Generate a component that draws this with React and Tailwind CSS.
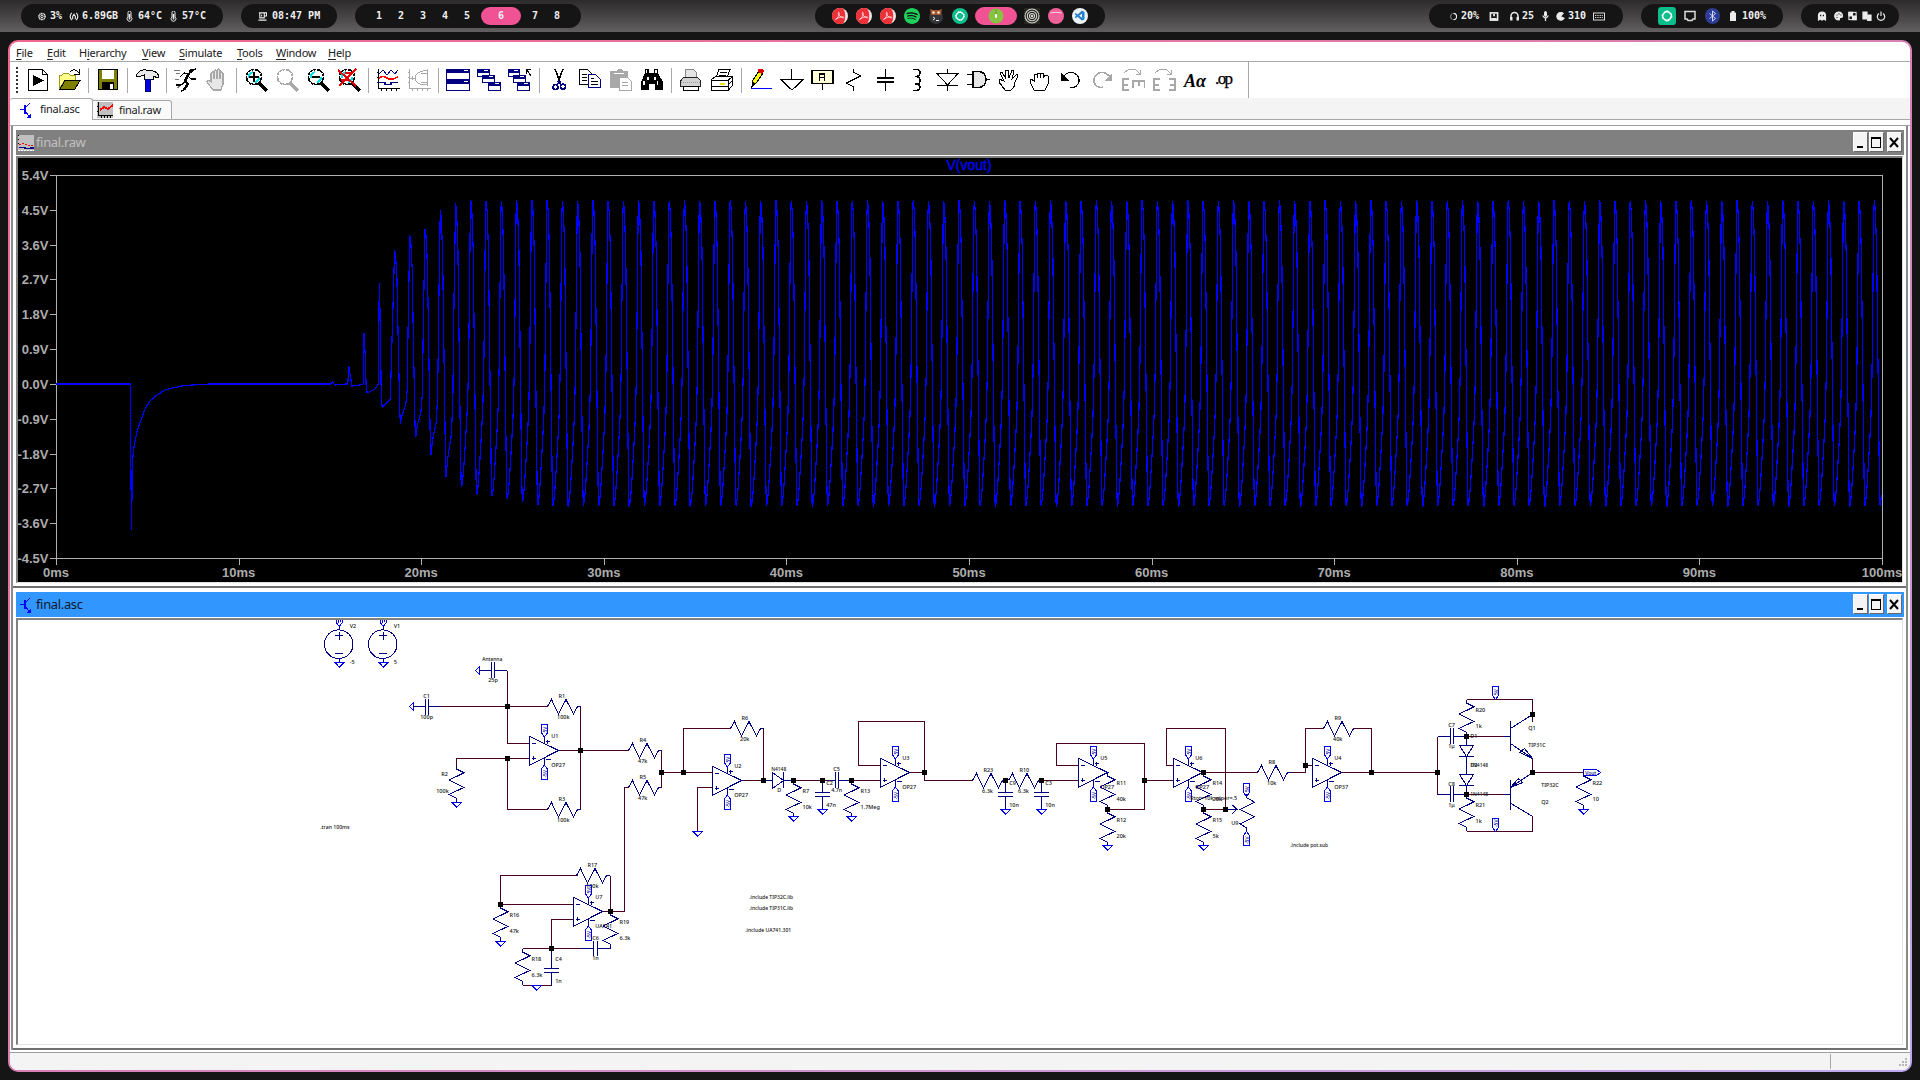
import React from "react";
import { SiSpotify } from "react-icons/si";
import { VscVscode } from "react-icons/vsc";

const NAVY = "#000080";
const BLUE = "#0000e6";
const WIRE = "#4b0026";

/* ---------- top status bar ---------- */

const Pill = ({ className, children }) => (
  <div className={`h-6 rounded-full bg-[#151515] flex items-center shrink-0 ${className}`}>{children}</div>
);

const Glyph = ({ w = 10, h = 10, className = "", children }) => (
  <svg width={w} height={h} viewBox="0 0 10 10" className={`shrink-0 ${className}`} fill="none" stroke="#ececec" strokeWidth="1.2">
    {children}
  </svg>
);

const Thermo = ({ className = "" }) => (
  <svg width="7" height="11" viewBox="0 0 7 11" className={`shrink-0 ${className}`} fill="none" stroke="#ececec">
    <path d="M2 1.500a1.500 1.500 0 0 1 3 0V6a2.400 2.400 0 1 1-3 0z" />
    <path d="M3.500 3v5.500" strokeWidth="1.600" />
  </svg>
);

const Acrobat = () => (
  <svg width="16" height="16" viewBox="0 0 16 16" className="shrink-0">
    <circle cx="8" cy="8" r="8" fill="#f4e4e4" />
    <path d="M11 .6A8 8 0 1 0 11 15.4C14 12 14 4 11 .6z" fill="#ee3138" />
    <path d="M3.500 11.500c2-1 4-4 3.700-6.500-.1-1-1.200-1-1 .2.4 2.400 2.600 4.400 5 4.600 1 0 .8-1-.4-1-2.600 0-5 1-7.300 2.700z" fill="none" stroke="#fff" strokeWidth=".7" />
  </svg>
);

const Swirl = () => (
  <path d="M6.300 4.200a4.800 4.800 0 0 1 5.900 4.400M11.800 6.300a4.800 4.800 0 0 1-4.400 5.900M9.700 11.800a4.800 4.800 0 0 1-5.900-4.400M4.200 9.700a4.800 4.800 0 0 1 4.400-5.900" fill="none" stroke="#fff" strokeWidth="1.300" strokeLinecap="round" />
);

const TopBar = () => (
  <div className="h-8 w-full flex items-center bg-linear-to-b from-[#2d2b2c] to-[#625f60] text-[#f0f0f0] text-[10px] font-bold leading-none whitespace-pre font-['DejaVu_Sans_Mono',monospace]">
    <Pill className="ml-[21px] w-[202px] pl-[17px]">
      <Glyph w={8} h={9}><circle cx="5" cy="5" r="3.800" strokeWidth="1.900" strokeDasharray="1.500 .5" /><circle cx="5" cy="5" r="1.500" /></Glyph>
      <span className="ml-[4px] w-[19px]">3%</span>
      <Glyph w={10} h={9}><path d="M2.500 1Q-1 5 2.500 9M7.500 1q3.500 4 0 8M3.500 8V5L5 2.500 6.500 5v3" /></Glyph>
      <span className="ml-[3px] w-[44px]">6.89GB</span>
      <Thermo />
      <span className="ml-[5px] w-[32px]">64°C</span>
      <Thermo />
      <span className="ml-[5px]">57°C</span>
    </Pill>
    <Pill className="ml-[18px] w-[96px] pl-[17px]">
      <Glyph w={9} h={9}><path d="M1 1h8.500v3.500H7M2 1v5.500h5V1M.5 9h9M4 3v2" /></Glyph>
      <span className="ml-[5px]">08:47 PM</span>
    </Pill>
    <Pill className="ml-[18px] w-[226px] pl-[13px]">
      {[1, 2, 3, 4, 5].map((n) => (
        <span key={n} className="w-[22px] text-center">{n}</span>
      ))}
      <span className="ml-[3px] w-[40px] h-[18px] rounded-full bg-[#f05294] flex items-center justify-center">6</span>
      <span className="ml-[3px] w-[22px] text-center">7</span>
      <span className="w-[22px] text-center">8</span>
    </Pill>
    <Pill className="ml-[234px] w-[290px] pl-[17px] gap-2">
      <Acrobat /><Acrobat /><Acrobat />
      <div className="size-4 rounded-full bg-[#111] flex"><SiSpotify size={16} color="#1ed05c" /></div>
      <svg width="16" height="16" viewBox="0 0 16 16"><circle cx="8" cy="9" r="7" fill="#343539" /><path d="M2 1l3 1h6l3-1-1 6H3z" fill="#a3532c" /><circle cx="5.500" cy="4.500" r="1.300" fill="#f5e9d8" /><circle cx="10.500" cy="4.500" r="1.300" fill="#f5e9d8" /><path d="M5 9l2 1.500L5 12M8 12.500h3" stroke="#eee" fill="none" /></svg>
      <svg width="16" height="16" viewBox="0 0 16 16"><circle cx="8" cy="8" r="8" fill="#0dbd8b" /><Swirl /></svg>
      <div className="-ml-px w-[42px] h-[18px] rounded-full bg-[#f05294] flex items-center justify-center">
        <svg width="16" height="16" viewBox="0 0 16 16"><circle cx="8" cy="8" r="7.500" fill="#85c341" /><path d="M8 1v5" stroke="#699c33" /><rect x="7" y="6" width="2" height="4" rx="1" fill="#fff" /></svg>
      </div>
      <svg width="16" height="16" viewBox="0 0 16 16" className="-ml-px" fill="none" stroke="#d5d5d5" strokeWidth="1.100"><rect width="16" height="16" fill="#26261f" stroke="none" /><circle cx="8" cy="8" r="7" /><circle cx="8" cy="8" r="4.700" /><circle cx="8" cy="8" r="2.500" /><circle cx="8" cy="8" r=".7" /></svg>
      <svg width="16" height="16" viewBox="0 0 16 16"><circle cx="8" cy="8" r="8" fill="#f0609a" /><path d="M2.500 5Q8 3.500 13.500 5" stroke="#fbd5e3" strokeWidth="1.200" fill="none" /></svg>
      <div className="size-4 rounded-full bg-[#eef3f8] flex items-center justify-center"><VscVscode size={12} color="#1f7fd0" /></div>
    </Pill>
    <Pill className="ml-[324px] w-[194px] pl-[20px]">
      <Glyph w={8} h={9}><path d="M4 1Q0 5 4 9" strokeWidth="1" stroke="#bbb" /><path d="M5.500 1a4 4 0 0 1 0 8" strokeWidth="1.500" /></Glyph>
      <span className="ml-[4px] w-[28px]">20%</span>
      <Glyph w={10} h={9}><rect x="1" y="1" width="8" height="8" strokeWidth="1.800" /><path d="M2 8h6M4 3.500h2" strokeWidth="2.500" /></Glyph>
      <Glyph w={11} h={10} className="ml-[10px]"><path d="M1.500 8V5a3.500 3.500 0 0 1 7 0v3" strokeWidth="1.500" /><path d="M1.800 6v3.500M8.200 6v3.500" strokeWidth="2.400" /></Glyph>
      <span className="ml-[2px] w-[20px]">25</span>
      <svg width="7" height="10" viewBox="0 0 7 10" className="shrink-0" fill="none" stroke="#ececec"><rect x="2.500" y=".5" width="2" height="5" rx="1" fill="#ececec" /><path d="M.6 4.500q2.900 5 5.800 0M3.500 7v3" strokeWidth="1.300" /></svg>
      <Glyph w={9} h={9} className="ml-[7px]"><path d="M8 1.500A4.300 4.300 0 1 0 9 7L5 5z" fill="#ececec" /></Glyph>
      <span className="ml-[3px] w-[25px]">310</span>
      <svg width="12" height="9" viewBox="0 0 12 9" className="shrink-0" fill="none" stroke="#d8d8d8"><rect x=".5" y="1" width="11" height="7" /><path d="M2 3.500h8M2 5.500h8" strokeDasharray="1 .7" /></svg>
    </Pill>
    <Pill className="ml-[18px] w-[142px] pl-[17px]">
      <svg width="18" height="18" viewBox="0 0 16 16" className="shrink-0"><rect width="16" height="16" rx="3" fill="#0dbd8b" /><Swirl /></svg>
      <svg width="12" height="12" viewBox="0 0 12 12" className="ml-[8px] shrink-0"><path d="M1 1.500h10v7.500H9l-1 1.500H4L3 9H1z" fill="none" stroke="#ddd" strokeWidth="1.500" /></svg>
      <svg width="15" height="16" viewBox="0 0 15 16" className="ml-[9px] shrink-0"><ellipse cx="7.500" cy="8" rx="7.500" ry="8" fill="#2d3c94" /><path d="M4.500 5.500l6 5L7.500 13V3l3 2.500-6 5" fill="none" stroke="#cfd6ff" /></svg>
      <svg width="6" height="10" viewBox="0 0 6 10" className="ml-[10px] shrink-0" fill="#ececec"><rect y="1.500" width="6" height="8.500" rx=".5" /><rect x="1.500" width="3" height="2" /></svg>
      <span className="ml-[6px]">100%</span>
    </Pill>
    <Pill className="ml-[18px] w-[98px] pl-[16px]">
      <Glyph w={10} h={10}><path d="M1.500 9V4.500a3.500 3.500 0 0 1 7 0V9l-1.500-1-2 1-2-1z" fill="#ececec" /><path d="M3 4.500h1.200M5.800 4.500H7" stroke="#151515" strokeWidth="1.500" /></Glyph>
      <Glyph w={11} h={10} className="ml-[6px]"><path d="M5 1a4 4 0 1 0 .5 8c1 0 0-2 1-2.500S9 7 9 5 7.500 1 5 1z" fill="#ececec" /><path d="M3 4h1M5 2.800h1M7 4h1M3 6.500h1" stroke="#151515" /></Glyph>
      <Glyph w={9} h={10} className="ml-[4px]"><rect x="1" y="1" width="8" height="8" /><path d="M1 1h4v4H1zM5 5h4v4H5z" fill="#ececec" /></Glyph>
      <Glyph w={10} h={10} className="ml-[5px]"><path d="M1 1h4v7H1z" fill="#ececec" /><path d="M5.700 4h3.300v5.500H5.700z" fill="#ececec" /></Glyph>
      <Glyph w={10} h={10} className="ml-[4px]"><path d="M3 2.500a3.700 3.700 0 1 0 4 0M5 .5v4.500" /></Glyph>
    </Pill>
  </div>
);

/* ---------- toolbar icons, 24x24 ---------- */

const G = "#a8a8a8";
const lens = (c, t) => (
  <>
    <circle cx="10" cy="9" r="7.500" fill="#fff" stroke={c} strokeWidth="1.700" strokeDasharray="3 .6" />
    {t && <path d="M5 10a5 5 0 0 1 4-6M15 9a5 5 0 0 1-4 5" stroke="#00e0e8" strokeWidth="2" fill="none" />}
    <path d="M15 15l8 8" stroke={c} strokeWidth="3.500" />
  </>
);
const win = (x, y, w, h) => (
  <>
    <rect x={x + 0.5} y={y + 0.5} width={w} height={h} fill="#fff" stroke={NAVY} />
    <rect x={x} y={y} width={w + 1} height="4" fill={NAVY} />
    <path d={`M${x + w - 5} ${y + 1.5}h4`} stroke="#fff" />
  </>
);
const k = { stroke: "#000", fill: "none" };

const I = {
  run: <><path d="M2.500 1.500h14l5 5v16h-19zM16.500 1.500v5h5" stroke="#000" fill="#fff" /><path d="M7 7v11l11-5.500z" /></>,
  open: <><path d="M2.500 21V7.500h2l2-2h5l2 2h5V12H8z" fill="#ffff8a" stroke="#9a9a20" /><path d="M2.500 21.500L8 12.500h15l-5.500 9z" fill="#808000" stroke="#000" /><path d="M13 4q5-5 9 1M22 1v5h-5" {...k} /></>,
  save: <><rect x="2.500" y="1.500" width="19" height="20" fill="#808000" stroke="#000" /><rect x="6" y="2" width="12" height="9" fill="#fff" /><rect x="6" y="14" width="12" height="8" /><rect x="14" y="16" width="3" height="5" fill="#fff" /></>,
  hammer: <><path d="M1 8q3-7 10-6h5l2 1q5 1 6 6l-1 1-5-2v3H9V7L3 9z" fill="#e9e9e9" stroke="#000" /><path d="M10 11h5v12h-5z" fill="#0000e0" stroke="#000070" /></>,
  runner: <><circle cx="17" cy="3" r="2" /><path d="M15 5l-4 8 3 3-4 6" stroke="#000" strokeWidth="2.500" fill="none" /><path d="M11 14l-4 3H2M15 6l-5-1-4 4M14 8l3 3h5M10 22l-3 1M19 2l3-1" stroke="#000" strokeWidth="1.300" fill="none" /><path d="M0 2l6 1M2 5h4M1 12l4-1M3 20l3-2" stroke="#777" fill="none" /></>,
  stop: <path d="M8 22l-6-8q0-3 4 0V5q1-2 3 0v6V3q1-2 3 0v8V2q1-2 3 0v9V5q1-2 3 0v11l-2 6z" fill="#e8e8e8" stroke={G} strokeWidth="1.300" />,
  zin: <>{lens("#000", 1)}<path d="M10 4v10M5 9h10" stroke="#000" strokeWidth="2" /></>,
  zpan: lens(G),
  zout: <>{lens("#000", 1)}<path d="M6 9h8" stroke="#000" strokeWidth="2" /></>,
  zfit: <>{lens("#000", 1)}<path d="M1 2l18 16M19 1L2 18M8 5h8M4 12h9" stroke="#e80000" strokeWidth="2" /></>,
  plot: <><path d="M2.500 1v19.500H24M1 4.500h2M1 9.500h2M1 14.500h2M5.500 20v3M10.500 20v3M15.500 20v3M20.500 20v3" {...k} /><path d="M3 6l4-4 4 5 4-5 4 4 3-4" stroke={NAVY} fill="none" /><path d="M3 10q4-3 8 0t11-1" stroke="red" strokeWidth="1.500" fill="none" /><path d="M3 14.500h6v2h6v-2h7" stroke={NAVY} strokeWidth="1.500" fill="none" /></>,
  fft: <path d="M2.500 1v19.500H24M1 4.500h2M1 9.500h2M1 14.500h2M5.500 20v3M10.500 20v3M15.500 20v3M20.500 20v3M20.500 1v17M20 2.500h-4M20 16.500h-4M16 3Q8 5 8 10q0 5 8 7M3 10h5M5 8v4M14 5h6M14 14h6" stroke={G} fill="none" />,
  tile: <>{win(0, 1, 23, 10)}{win(0, 12, 23, 10)}</>,
  casc: <>{win(0, 1, 12, 7)}{win(5, 7, 12, 7)}{win(11, 14, 12, 8)}</>,
  arr: <>{win(0, 1, 11, 7)}{win(5, 7, 12, 7)}{win(9, 14, 12, 8)}<path d="M23 8l-4-6M18.500 6V1.500H23" {...k} /></>,
  cut: <><path d="M8 1l5 13M16 1l-5 13" stroke="#000" strokeWidth="1.500" /><path d="M13 13l-3 4M11 13l3 3" stroke={NAVY} strokeWidth="1.500" /><circle cx="8.500" cy="19" r="2.500" fill="none" stroke={NAVY} strokeWidth="1.500" /><circle cx="16" cy="18.500" r="2.500" fill="none" stroke={NAVY} strokeWidth="1.500" /></>,
  copy: <><path d="M1.500 1.500h8l4 4v11h-12z" fill="#fff" stroke="#000" /><path d="M4 6.500h5M4 9.500h5M4 12.500h5" stroke="#000" /><path d="M10.500 6.500h7l5 5v8h-12z" fill="#fff" stroke={NAVY} strokeWidth="1.200" /><path d="M13 10.500h3M13 13.500h7M13 16.500h7" stroke="#000" /></>,
  paste: <><path d="M1 3h6l2-2h3l2 2h5v17H1z" fill={G} /><path d="M5 5.500h10" stroke="#fff" /><path d="M10.500 9.500h8l4 4v9h-12z" fill="#fff" stroke={G} /><path d="M13 14.500h6M13 17.500h6" stroke={G} /></>,
  find: <><path d="M5 1h4v4h5V1h4v4l5 9v8h-8v-6H9v6H1v-8l4-9z" /><path d="M6.500 2v3M16 2v3M4 13v4M17.500 13v4M8 9v3M15 9v3" stroke="#fff" strokeWidth="1.500" /></>,
  print: <><path d="M6.500 10V1.500h8l3 3V10" fill="#e4e4e4" stroke="#888" /><path d="M4.500 9.500h14l3 3V18h-20v-5z" fill="#d2d2d2" stroke="#222" /><path d="M4.500 18h15v4h-15z" fill="#fff" stroke="#000" /><path d="M2 14h20" stroke="#999" strokeDasharray="1 1" /></>,
  setup: <><path d="M6 10l3-8.500h11L17 10z" fill="#fff" stroke="#000" /><path d="M10 4.500h7M9 7.500h7" stroke="#000" /><path d="M1.500 11.500l4-3h17v9l-4 4.500h-17z" fill="#fff" stroke="#000" /><path d="M1.500 12h17l4-3.500M18.500 12v10M2 18.500h16M19 16l4-4" {...k} /><path d="M10 15.500h5" stroke="#e8e800" strokeWidth="2" /></>,
  pencil: <><path d="M3 18l1-6 6-9 4 2-6 9z" fill="#ff0" stroke="#000" /><path d="M9 1h4l2 2-2 3-4-2z" fill="#e00000" /><path d="M2 20l2-6 3 2z" /><path d="M2 20.500h21" stroke="#0000ff" /></>,
  gnd: <path d="M11.500 1v10M1 11.500h22L12 22z" stroke="#000" strokeWidth="1.300" fill="none" />,
  label: <><rect x="1" y="2.500" width="21" height="13" rx="1" fill="#ffffd8" stroke="#000" strokeWidth="1.700" /><path d="M8.500 13V6h5v7M8 9.500h6" {...k} strokeWidth="1.700" /><path d="M11.500 16v6" stroke="#000" /></>,
  res: <path d="M11.500 1v3l7 4-14 7 7 4v4" {...k} />,
  cap: <><path d="M12.500 1v8M12.500 15v8" {...k} /><path d="M4 10h17M4 14h17" {...k} strokeWidth="2" /></>,
  ind: <path d="M9 1.500h3q4 0 4 3.500t-5 3.500M11 8.500q5 0 5 4t-5 3.500M11 16q5 0 5 3t-4 3.500H9" {...k} strokeWidth="1.500" />,
  diode: <path d="M12.500 1v4M2 5.500h21L12.500 17zM2 17.500h21M12.500 17v6" {...k} />,
  gate: <><path d="M7 3.500h6q7 1 7 8t-7 8H7z" fill="#e6e6e6" stroke="#000" strokeWidth="1.500" /><path d="M1 6.500h6M1 16.500h6M20 11.500h4" stroke="#000" strokeWidth="1.500" /></>,
  hand1: <path d="M8 22l-6-8V11l5 2L3 5l2-1 4 7-1-9h3l1 8 3-8 2 1-2 8 5-5 1 2-3 6q0 5-4 8z" stroke="#000" fill="#fff" />,
  hand2: <path d="M6 22l-4-8 1-3 3 2V6h3v4-5h3v5-5h3v5l2-3 3 1v8l-3 6z" stroke="#000" fill="#fff" />,
  undo: <><path d="M5 8q4-5 10-3 6 3 5 9-3 7-9 5" {...k} strokeWidth="1.100" /><path d="M2 5v8h8z" /></>,
  redo: <><path d="M19 8q-4-5-10-3-6 3-5 9 3 7 9 5" stroke={G} strokeWidth="1.500" fill="none" /><path d="M22 5v8h-8z" fill={G} /></>,
  rot: <><path d="M3 5l5-4h6l5 5M19 2v4h-4" stroke={G} fill="none" /><path d="M8 11H2v11h6M2 16.500h5M11.500 20v-7h12v7M17.500 13v5" stroke={G} strokeWidth="2" fill="none" /></>,
  mir: <><path d="M3 5l5-4h6l5 5M19 2v4h-4" stroke={G} fill="none" /><path d="M8 11H2v11h6M2 16.500h5M17 11h6v11h-6M23 16.500h-5" stroke={G} strokeWidth="2" fill="none" /></>,
  aa: <text x="1" y="19" fontFamily="Liberation Serif, serif" fontStyle="italic" fontWeight="bold" fontSize="18" textLength="22" lengthAdjust="spacingAndGlyphs">Aα</text>,
  op: <text x="1" y="16" fontFamily="Liberation Serif, serif" fontSize="17" stroke="#000" strokeWidth=".25" textLength="18" lengthAdjust="spacing">.op</text>,
};

const TOOL_GROUPS = [
  ["run", "open"], ["save"], ["hammer"], ["runner", "stop"], ["zin", "zpan", "zout", "zfit"], ["plot", "fft"],
  ["tile", "casc", "arr"], ["cut", "copy", "paste", "find"], ["print", "setup"],
  ["pencil", "gnd", "label", "res", "cap", "ind", "diode", "gate", "hand1", "hand2", "undo", "redo", "rot", "mir", "aa", "op"],
];

const Toolbar = () => (
  <div className="h-9 flex">
    <div className="flex items-center w-[1239px] border-r border-[#a8a8a8] pl-[6px]">
      <div className="w-[2px] h-[26px] mr-[8px] border-l-2 border-dotted border-[#333]" />
      <div className="flex items-center gap-[7px]">
        {TOOL_GROUPS.map((g, i) => (
          <React.Fragment key={i}>
            {i > 0 && <div className="w-px h-[25px] bg-[#a8a8a8]" />}
            {g.map((n) => (
              <svg key={n} width="24" height="24" viewBox="0 0 24 24" shapeRendering="crispEdges" className="shrink-0">{I[n]}</svg>
            ))}
          </React.Fragment>
        ))}
      </div>
    </div>
  </div>
);

const MENU = [
  ["", "F", "ile", "w-[31px]"], ["", "E", "dit", "w-[32px]"], ["H", "i", "erarchy", "w-[63px]"], ["", "V", "iew", "w-[37px]"],
  ["", "S", "imulate", "w-[58px]"], ["", "T", "ools", "w-[39px]"], ["", "W", "indow", "w-[52px]"], ["", "H", "elp", "w-[40px]"],
];

const TransistorIcon = () => (
  <svg width="12" height="16" viewBox="0 0 12 16" shapeRendering="crispEdges" stroke="#0000ff" fill="none" className="shrink-0">
    <path d="M0 7.500h4" /><path d="M4.500 3v9" strokeWidth="2" /><path d="M5 6l5-5M5 9l4 5" /><path d="M10.500 11.500v4H7z" fill="#0000ff" stroke="none" />
  </svg>
);

const PlotIcon = ({ muted }) => (
  <svg width="16" height="16" viewBox="0 0 16 16" shapeRendering="crispEdges" fill="none" className="shrink-0">
    <rect width="16" height="16" fill="#c0c0c0" />
    {muted ? (
      <><path d="M1 9.500l5-1 4 1.500h6" stroke="red" strokeDasharray="2 1" /><path d="M1 12.500h5l2 1 8-.5" stroke={NAVY} strokeWidth="1.500" /><path d="M.5 0v10" stroke="#000" strokeDasharray="1 3" /><path d="M0 15.500h16" stroke="#fff" strokeDasharray="2 1" /></>
    ) : (
      <><path d="M1.500 0v13.500H16M0 4.500h2M0 9.500h2M4.500 13v3M7.500 13v3M10.500 13v3M13.500 13v3" stroke="#000" /><path d="M3 8l4-3 4 2 5-4" stroke="red" strokeWidth="2" /></>
    )}
  </svg>
);

const Tabs = () => (
  <div className="h-[22px] flex items-end bg-[#f4f4f4] text-[11px] font-['Noto_Sans',sans-serif] text-[#202020]">
    <div className="h-[22px] w-[83px] flex items-center pl-[10px] bg-white border border-b-0 border-l-0 border-[#a8a8a8] rounded-t-[3px]">
      <TransistorIcon />
      <span className="ml-[8px] tracking-[-0.3px]">final.asc</span>
    </div>
    <div className="h-[20px] w-[79px] flex items-center pl-[4px] bg-[#fafafa] border border-l-0 border-[#a8a8a8] rounded-tr-[3px]">
      <PlotIcon />
      <span className="ml-[6px] tracking-[-0.3px]">final.raw</span>
    </div>
    <div className="flex-1 h-full border-b border-[#a8a8a8]" />
  </div>
);

/* ---------- document window chrome ---------- */

const CapBtn = ({ children, className = "" }) => (
  <div className={`self-start mt-[2px] w-[15px] h-5 bg-[#f4f4f4] border border-white border-r-[#696969] border-b-[#696969] shrink-0 ${className}`}>
    <svg width="13" height="18" viewBox="0 0 13 18" shapeRendering="crispEdges" fill="none" stroke="#000" strokeWidth="2">{children}</svg>
  </div>
);

const DocWindow = ({ title, icon, bar, body, children }) => (
  <div className="pl-[3px] pr-[2px] pt-[4px] bg-white border-b-2 border-[#6f6f6f]">
    <div className={`h-[25px] flex items-center pr-[2px] ${bar}`}>
      {icon}
      <span className="flex-1 text-[13px] font-['Noto_Sans',sans-serif] leading-none tracking-[-0.35px]">{title}</span>
      <CapBtn><path d="M3 14h6" /></CapBtn>
      <CapBtn className="ml-px"><path d="M1.500 4.500h9v10h-9zM1 5h10" strokeWidth="1.200" /></CapBtn>
      <CapBtn className="ml-[3px]"><path d="M2 5l8 9M10 5l-8 9" strokeWidth="2" shapeRendering="auto" /></CapBtn>
    </div>
    <div className={`mt-px mr-px border-t-2 border-l-2 border-r border-b border-t-[#808080] border-l-[#808080] border-r-[#e3e3e3] border-b-[#e3e3e3] ${body}`}>
      {children}
    </div>
    <div className="h-[3px]" />
  </div>
);

/* ---------- waveform ---------- */

const PERIOD = 15.255;
const RAMP = [
  [366, 386], [333, 393], [283, 407], [250, 423], [235, 437], [229, 455], [210, 477], [203, 487],
  [200, 495], [201, 496], [201, 499], [200, 502], [200, 505],
];

function tracePath() {
  const pts = [
    [56, 384], [130.5, 384], [130.5, 427], [131.5, 530], [132.5, 461], [134, 447], [137, 431], [141, 420], [145, 409],
    [150, 401], [157, 395], [165, 390], [173, 388], [182, 386], [192, 385], [210, 384], [331, 384], [332.5, 382],
    [334, 384], [335, 385], [346, 384],
  ];
  const first = 1874.3 - 100 * PERIOD;
  for (let i = 0; i <= 100; i++) {
    const x = first + i * PERIOD;
    const ramp = RAMP[i];
    const hi = ramp ? ramp[0] : i % 3 === 1 ? 200 : 201;
    const lo = ramp ? ramp[1] : i % 4 === 2 ? 507 : 505.5;
    const f = (v) => hi + ((v - 200) / 307) * (lo - hi);
    if (i < 3) {
      pts.push([x - 1, 384], [x, hi], [x + 1, hi + (384 - hi) * 0.4], [x + 2, lo - 8], [x + 3, lo], [x + 11, lo - (i ? i * 4 : 1)]);
    } else {
      [[0, 200], [1, 210], [2.3, 249], [3.3, 333], [4.3, 417], [5.2, 487], [5.7, 506], [6, 507]].forEach(([dx, v]) => {
        if (x + dx < 1882) pts.push([x + dx, f(v)]);
      });
      if (i < 100) {
        const next = RAMP[i + 1] ? RAMP[i + 1][0] : 200;
        if (i < 7) {
          const d = lo - 384;
          pts.push([x + 6.5, lo - d * 0.1], [x + 8, lo - d * 0.25], [x + 11, lo - d * 0.45], [x + 12.5, lo - d * 0.8], [x + 13.8, 384 - (384 - next) * 0.5]);
        } else {
          [[7, 500], [8, 488], [9, 472], [10, 455], [11, 437], [12, 416], [13, 375], [14, 285], [14.7, 215]].forEach(([dx, v]) => pts.push([x + dx, f(v)]));
        }
      }
    }
  }
  pts.push([1881.5, 495]);
  return "M" + pts.map(([a, b]) => `${a.toFixed(1)} ${b.toFixed(1)}`).join("L");
}

const VOLTS = ["5.4V", "4.5V", "3.6V", "2.7V", "1.8V", "0.9V", "0.0V", "-0.9V", "-1.8V", "-2.7V", "-3.6V", "-4.5V"];

const Waveform = () => (
  <svg width="1884" height="424" viewBox="18 158 1884 424" className="block bg-black" fontFamily="Liberation Sans, Arial, sans-serif" fontWeight="bold" fontSize="13">
    <g shapeRendering="crispEdges" stroke="#b0b0b0" fill="none">
      <path d="M56.500 175.500H1882.500V558.500H56.500z" />
      {VOLTS.map((v, i) => { const y = Math.round(175 + i * 34.82) + 0.5; return <path key={v} d={`M50 ${y}h6`} />; })}
      {Array.from({ length: 11 }, (_, i) => <path key={i} d={`M${Math.round(56 + i * 182.6) + 0.5} 558v7`} />)}
    </g>
    <g fill="#acacac">
      {VOLTS.map((v, i) => <text key={v} x="48.5" y={180 + i * 34.82} textAnchor="end">{v}</text>)}
      {Array.from({ length: 11 }, (_, i) => <text key={i} x={56 + i * 182.6} y="577" textAnchor="middle">{`${i * 10}ms`}</text>)}
    </g>
    <path d={tracePath()} fill="none" stroke="#0000ff" strokeWidth="1.2" shapeRendering="crispEdges" />
    <text x="969" y="170" textAnchor="middle" fill="#0000ff" fontWeight="normal" fontSize="14" stroke="#0000ff" strokeWidth=".3">V(vout)</text>
  </svg>
);

/* ---------- schematic ---------- */

const W = ({ d }) => <path d={d} stroke={WIRE} />;
const N = ({ d }) => <path d={d} />;
const Node = ({ x, y }) => <rect x={x - 2.3} y={y - 2.3} width="5" height="5" fill="#000" stroke="none" />;
const T = ({ x, y, s, w }) => (
  <text x={x} y={y} textLength={w} lengthAdjust="spacingAndGlyphs" fill="#101010" stroke="none">{s}</text>
);
const Gnd = ({ x, y }) => <path d={`M${x - 4.3} ${y}h9l-4.500 4.700z`} stroke={BLUE} />;
const GndL = ({ x, y }) => <path d={`M${x} ${y - 4}v8l-4-4z`} stroke={BLUE} />;
const RH = ({ x, y, n, v }) => (
  <>
    <N d={`M${x} ${y}l4-7 7 14.500 7.500-14.500 7.500 14.500 4-7.500h3`} />
    <T x={x + 11} y={y - 8.3} s={n} />
    <T x={x + 9.5} y={y + 12.5} s={v} />
  </>
);
const RV = ({ x, y, n, v, left }) => (
  <>
    <N d={`M${x} ${y}v3.500l7.500 3.800-15 7.300 15 7.300-15 7 7.500 4v4`} />
    {left ? <><T x={x - 15.3} y={y + 10.5} s={n} /><T x={x - 20.3} y={y + 27.5} s={v} /></> : <><T x={x + 9} y={y + 12.6} s={n} /><T x={x + 9} y={y + 29} s={v} /></>}
  </>
);
const CV = ({ x, y, n, v }) => (
  <>
    <N d={`M${x} ${y}v12M${x - 7.3} ${y + 12}h15M${x - 7.3} ${y + 16}h15M${x} ${y + 16}v13`} />
    <Gnd x={x} y={y + 29} />
    <T x={x + 3.7} y={y + 5} s={n} />
    <T x={x + 3.7} y={y + 26.7} s={v} />
  </>
);
/* Supply flag: (x, y) is the tip of the flag */
const Flag = ({ x, y, up, s }) => (
  <>
    <path d={up ? `M${x} ${y}l-3-4v-9h6v9z` : `M${x} ${y}l-3 4v10h6v-10z`} stroke={BLUE} />
    <text x={0} y={0} transform={`translate(${x + 2},${up ? y - 4.5 : y + 12.5}) rotate(-90)`} fontSize="5" fill={NAVY} stroke="none">{s}</text>
  </>
);
const Amp = ({ x, y, n, v = "OP27" }) => (
  <>
    <N d={`M${x} ${y - 14.3}v29l29-14.700z`} />
    <N d={`M${x + 2} ${y - 7.5}h4M${x + 2} ${y + 7.5}h4M${x + 4} ${y + 5.5}v4M${x + 15} ${y - 13}v6M${x + 15} ${y + 7.5}v6M${x + 16} ${y - 9}h4M${x + 18} ${y - 11}v4M${x + 16} ${y + 9}h5`} />
    <Flag x={x + 15} y={y - 13.5} up s="5V" />
    <Flag x={x + 15} y={y + 14.5} s="-5V" />
    <T x={x + 21.7} y={y - 12.7} s={n} />
    <T x={x + 21.7} y={y + 16.2} s={v} />
  </>
);
const Src = ({ x, n, v }) => (
  <>
    <circle cx={x} cy="644" r="14.3" fill="none" />
    <N d={`M${x - 3.5} 635.300h8M${x + 0.5} 631.300v8M${x - 3.5} 653.300h8M${x + 0.5} 658v4`} />
    <path d={`M${x + 0.5} 626.300l-3-4v-3M${x + 0.5} 626.300l3-4v-3`} stroke={BLUE} />
    <path d={`M${x - 0.5} 620v2.500M${x + 1.5} 620v1.500`} stroke={BLUE} />
    <N d={`M${x + 0.5} 626v4`} />
    <Gnd x={x + 0.5} y={662.3} />
    <T x={x + 11} y={627.7} s={n} />
    <T x={x + 11} y={664} s={v} />
  </>
);

const NODES = [
  [507.3, 706.3], [507.3, 758.3], [580.3, 750.3], [661.3, 772.3], [683.3, 772.3], [763.3, 780.3], [793.3, 780.3], [822.3, 780.3],
  [851.3, 780.3], [924.3, 772.3], [1005.3, 780.3], [1041.3, 780.3], [1144.3, 780.3], [1107.3, 809.3], [1203.3, 772.3],
  [1203.3, 809.3], [1225.3, 809.3], [1305.3, 765.3], [1371.3, 772.3], [1437.3, 772.3], [1466.3, 736.3], [1466.3, 794.3],
  [1532.3, 714.3], [1532.3, 772.3], [500.3, 904.3], [610.3, 911.3], [551.3, 948.3],
];

const Schematic = () => (
  <svg width="1884" height="424" viewBox="18 620 1884 424" className="block bg-white" fontFamily="Noto Sans, sans-serif" fontSize="5.5" fontWeight="500">
    <g transform="translate(.2 .2)" shapeRendering="crispEdges" fill="none" stroke={NAVY}>
      <Src x={338.5} n="V2" v="-5" />
      <Src x={382.5} n="V1" v="5" />

      <GndL x={479.3} y={670.3} />
      <N d="M479.300 670.300H491M491.300 662v16M494.300 662v16M494.300 670.300H507.300" />
      <T x={482} y={660.7} s="Antenna" w={20} />
      <T x={488} y={681.7} s="25p" />
      <GndL x={413.3} y={706.3} />
      <N d="M413.300 706.300H425M425.300 698.300v16M428.300 698.300v16M428.300 706.300H441" />
      <T x={423} y={697.5} s="C1" />
      <T x={420} y={718.7} s="100p" />
      <W d="M441 706.300H547.700M507.300 670.300V743.300H529M580.300 706.300V809.300M558 750.300H628.300M529 758.300H456.300V766M507.300 758.300V809.300H547.700" />
      <RH x={547.3} y={706.3} n="R1" v="100k" />
      <RH x={547.3} y={809.3} n="R3" v="100k" />
      <Amp x={529.3} y={750.3} n="U1" />
      <RV x={456.3} y={765.3} n="R2" v="100k" left />
      <Gnd x={456.3} y={802.3} />
      <T x={320} y={828.7} s=".tran 100ms" w={29.3} />

      <RH x={628.3} y={750.3} n="R4" v="47k" />
      <RH x={628.3} y={787.3} n="R5" v="47k" />
      <W d="M661.300 750.300V787.300M661.300 772.300H712M628.300 787.300H624.300V911.300H602M683.300 772.300V728.300H730.300M712 787.300H697.300V831.300M741 780.300H763.300V728.300" />
      <Gnd x={697.3} y={831.3} />
      <Amp x={712.3} y={780.3} n="U2" />
      <RH x={730.3} y={728.3} n="R6" v="20k" />
      <N d="M763.300 780.300H772.300M772.300 772.300v16l11-8zM783.300 772v16M783.300 780.300H793.300" />
      <T x={771} y={771} s="N4148" w={15} />
      <T x={777} y={792} s="D" />
      <W d="M793.300 780.300H830M851.300 780.300H880.300" />
      <N d="M829.300 780.300H835M835.300 772v16M838.300 772v16M838.300 780.300H851.300" />
      <T x={833} y={771} s="C5" />
      <T x={831} y={792} s="4.7n" w={11} />
      <CV x={822.3} y={780.3} n="C2" v="47n" />
      <RV x={793.3} y={780.3} n="R7" v="10k" />
      <Gnd x={793.3} y={816.3} />
      <RV x={851.3} y={780.3} n="R13" v="1.7Meg" />
      <Gnd x={851.3} y={816.3} />
      <Amp x={880.3} y={772.3} n="U3" />
      <W d="M880.300 765.300H858.300V721.300H924.300V780.300H972.300M909.700 772.300H924.300" />

      <RH x={972.3} y={780.3} n="R23" v="6.3k" />
      <RH x={1008.3} y={780.3} n="R10" v="6.3k" />
      <CV x={1005.3} y={780.3} n="C9" v="10n" />
      <CV x={1041.3} y={780.3} n="C3" v="10n" />
      <W d="M1041.300 780.300H1078.300M1078.300 765.300H1056.300V743.300H1144.300V809.300H1107.300M1144.300 780.300H1173.300" />
      <Amp x={1078.3} y={772.3} n="U5" />
      <RV x={1107.3} y={772.3} n="R11" v="40k" />
      <RV x={1107.3} y={809.3} n="R12" v="20k" />
      <Gnd x={1107.3} y={845.3} />
      <Amp x={1173.3} y={772.3} n="U6" />
      <W d="M1173.300 765.300H1166.300V728.300H1225.300V809.300H1203.300M1203.300 772.300H1257.300M1290 772.300H1305.300V728.300H1323.300M1305.300 765.300H1312.300" />
      <RV x={1203.3} y={772.3} n="R14" v="20k" />
      <RV x={1203.3} y={809.3} n="R15" v="5k" />
      <Gnd x={1203.3} y={845.3} />
      <T x={1190} y={800} s="Rtot=10k wiper=.5" w={47} />
      <N d="M1225.300 809.300H1236.300M1232.300 805l4.300 4.300-4.300 4.300M1246.300 794V797.300l8 4.700-14.500 7.300 14.500 7.300-14.500 7 6.500 4V832" />
      <Flag x={1246.3} y={796.3} up s="5V" />
      <Flag x={1246.3} y={831.3} s="-5V" />
      <T x={1231} y={825} s="U9" />
      <T x={1290} y={847} s=".include pot.sub" w={38} />

      <RH x={1257.3} y={772.3} n="R8" v="10k" />
      <RH x={1323.3} y={728.3} n="R9" v="40k" />
      <Amp x={1312.3} y={772.3} n="U4" v="OP37" />
      <W d="M1354 728.300H1371.300V772.300M1341 772.300H1437.300M1437.300 736.300V794.300" />
      <N d="M1437.300 736.300H1450.300M1437.300 794.300H1450.300M1450.300 728v16M1453.300 728v16M1450.300 786v16M1453.300 786v16M1453.300 736.300H1466.300M1453.300 794.300H1466.300" />
      <T x={1448} y={727} s="C7" />
      <T x={1448} y={748} s="1µ" />
      <T x={1448} y={786} s="C8" />
      <T x={1448} y={807} s="1µ" />
      <RV x={1466.3} y={699.3} n="R20" v="1k" />
      <RV x={1466.3} y={794.3} n="R21" v="1k" />
      <W d="M1466.300 699.300H1532.300V721.700M1466.300 736.300H1504M1466.300 794.300H1504M1466.300 831.300H1532.300V816M1532.300 758.300V772.300M1532.300 772.300H1583.300" />
      <Flag x={1495.3} y={699.3} up s="5V" />
      <Flag x={1495.3} y={831.3} up s="-5V" />
      <N d="M1466.300 736V745.300M1459.300 745.300h14l-7 11zM1459 756.300h15M1466.300 756V774.300M1459.300 774.300h14l-7 11zM1459 785.300h15M1466.300 785V794.300" />
      <T x={1470} y={738} s="D1" />
      <T x={1470} y={767} s="D2" />
      <T x={1470} y={767} s="1N4148" w={18} />
      <T x={1470} y={796} s="1N4148" w={18} />
      <N d="M1504 736.300H1510.300M1510.300 721v30M1510.300 728.300L1532.300 714.300M1510.300 743.300L1532.300 758.300L1524.300 748.300L1519.500 752.300L1532.300 758.300" />
      <N d="M1504 794.300H1510.300M1510.300 780v30M1532.300 772.300L1510.300 787.300L1518 778.500L1522.500 782.300L1510.300 787.300M1510.300 803L1532.300 816.300" />
      <T x={1528} y={730} s="Q1" />
      <T x={1528} y={747} s="TIP31C" w={17.5} />
      <T x={1541} y={787} s="TIP32C" w={17.5} />
      <T x={1541} y={804} s="Q2" />
      <path d="M1583.300 769.300h13l4 3-4 3h-13z" stroke={BLUE} />
      <text x="1585" y="774.6" fill={NAVY} stroke="none" textLength="11" lengthAdjust="spacingAndGlyphs">Vout</text>
      <RV x={1583.3} y={772.3} n="R22" v="10" />
      <Gnd x={1583.3} y={809.3} />

      <W d="M577.300 875.300H500.300V904.300H573M602 911.300H610.300V875.300M573 919.300H551.300V948.300M581 948.300H522.300M522.300 985.300H551.300" />
      <RH x={576.3} y={875.3} n="R17" v="100k" />
      <RV x={500.3} y={904.3} n="R16" v="47k" />
      <Gnd x={500.3} y={941.3} />
      <Amp x={573.3} y={911.3} n="U7" v="UA741" />
      <RV x={610.3} y={911.3} n="R19" v="6.3k" />
      <N d="M581 948.300H593M593.300 941v15M597.300 941v15M597.300 948.300H610.300M551.300 948.300V968M544 968.300h15M544 972.300h15M551.300 972.300V985.300" />
      <T x={592} y={940} s="C6" />
      <T x={592} y={960} s="1n" />
      <RV x={522.3} y={948.3} n="R18" v="6.3k" />
      <Gnd x={536.3} y={985.3} />
      <T x={555} y={961} s="C4" />
      <T x={555} y={983} s="1n" />

      <T x={749} y={898.7} s=".include TIP32C.lib" w={44} />
      <T x={749} y={909.7} s=".include TIP31C.lib" w={44} />
      <T x={745} y={931.7} s=".include UA741.301" w={46} />

      {NODES.map(([x, y], i) => <Node key={i} x={x} y={y} />)}
    </g>
  </svg>
);

/* ---------- page ---------- */

export default function App() {
  return (
    <div className="w-[1920px] h-[1080px] overflow-hidden bg-[#151515] flex flex-col">
      <TopBar />
      <div className="mt-2 ml-2 w-[1904px] h-[1032px] shrink-0 p-[2px] rounded-[10px] bg-linear-to-br from-[#f0688e] via-[#d880b4] to-[#bfa8ee]">
        <div className="h-full w-full rounded-[8px] overflow-hidden bg-white flex flex-col">
          <div className="h-5 shrink-0 flex items-center pl-[6px] pt-[2px] border-b border-[#a8a8a8] text-[11px] leading-none tracking-[-0.25px] font-['Noto_Sans',sans-serif] text-[#202020]">
            {MENU.map(([a, u, b, w]) => (
              <span key={u + b} className={`${w} shrink-0`}>{a}<span className="underline underline-offset-2">{u}</span>{b}</span>
            ))}
          </div>
          <Toolbar />
          <Tabs />
          <div className="h-[5px] shrink-0" />
          <div className="shrink-0 border-t border-[#a0a0a0] pl-px">
            <div className="border-l-2 border-r-2 border-[#8a8a8a] mr-[2px]">
              <DocWindow
                title="final.raw"
                bar="bg-[#808080] text-[#c0c0c0]"
                icon={<div className="ml-[2px] mr-[2px]"><PlotIcon muted /></div>}
                body="w-[1887px]"
              >
                <Waveform />
              </DocWindow>
              <DocWindow
                title="final.asc"
                bar="bg-[#3296ff] text-[#10182c]"
                icon={<div className="ml-[4px] mr-[4px]"><TransistorIcon /></div>}
                body="w-[1887px]"
              >
                <Schematic />
              </DocWindow>
            </div>
          </div>
          <div className="mt-[2px] flex-1 border-t border-[#a0a0a0] bg-[#f4f4f4] flex items-center">
            <div className="w-[1821px] h-[15px] border-r border-[#a8a8a8]" />
            <div className="flex-1 flex justify-end items-end h-full pr-[3px] pb-[4px]">
              <svg width="8" height="8" viewBox="0 0 8 8" shapeRendering="crispEdges" fill="#b8b8b8">
                <path d="M6 0h2v2H6zM3 3h2v2H3zM6 3h2v2H6zM0 6h2v2H0zM3 6h2v2H3zM6 6h2v2H6z" />
              </svg>
            </div>
          </div>
        </div>
      </div>
    </div>
  );
}
